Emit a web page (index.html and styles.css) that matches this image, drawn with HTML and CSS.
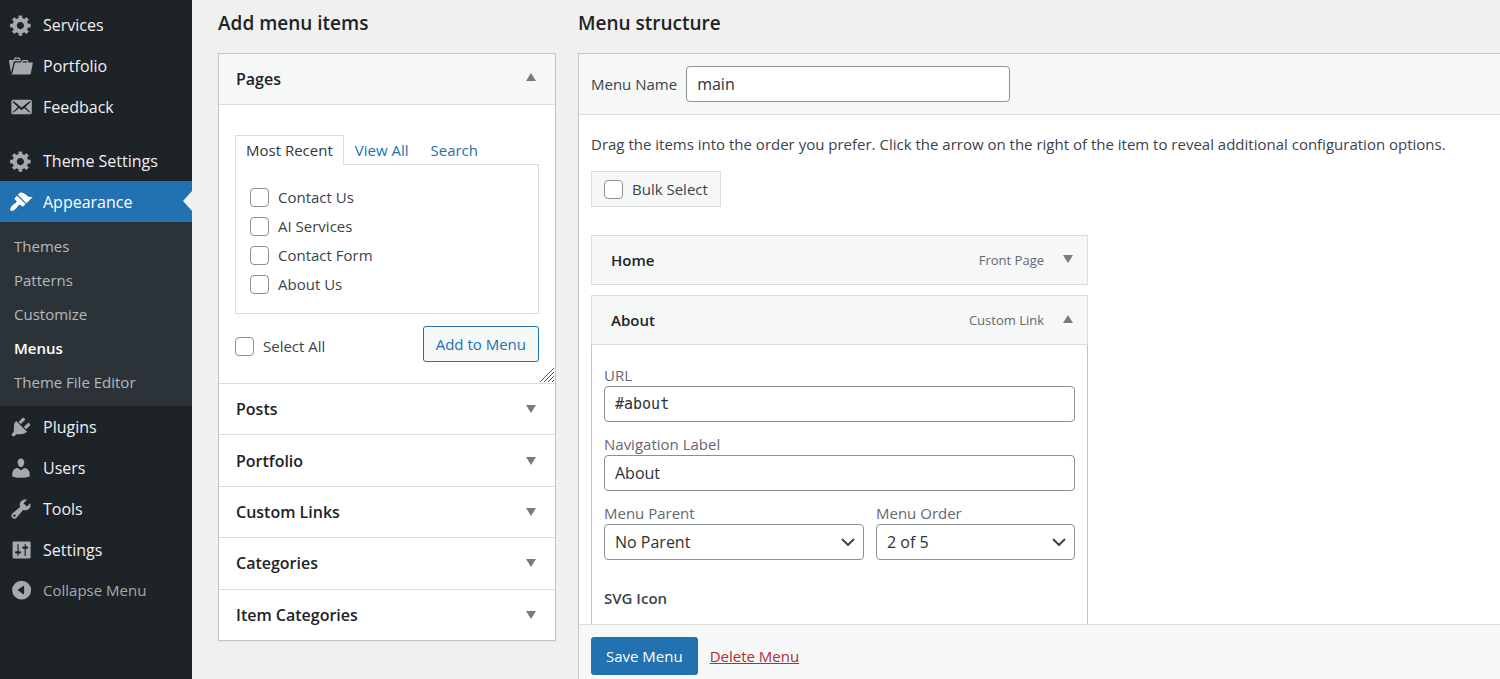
FILE: index.html
```
<!DOCTYPE html>
<html lang="en">
<head>
<meta charset="utf-8">
<title>Menus</title>
<link rel="stylesheet" href="styles.css">
</head>
<body>
<svg class="sprite" aria-hidden="true">
  <symbol id="i-gear" viewBox="0 0 20 20"><path d="M18 12h-2.18c-.17.7-.44 1.35-.81 1.93l1.54 1.54-2.1 2.1-1.54-1.54c-.58.36-1.23.63-1.91.79V19H8v-2.18c-.68-.16-1.33-.43-1.91-.79l-1.54 1.54-2.12-2.12 1.54-1.54c-.36-.58-.63-1.23-.79-1.91H1V9.03h2.17c.16-.7.44-1.35.8-1.94L2.43 5.55l2.1-2.1 1.54 1.54c.58-.37 1.24-.64 1.93-.81V2h3v2.18c.68.16 1.33.43 1.91.79l1.54-1.54 2.12 2.12-1.54 1.54c.36.59.64 1.24.8 1.94H18V12zm-8.5 1.5c1.66 0 3-1.34 3-3s-1.34-3-3-3-3 1.34-3 3 1.34 3 3 3z"/></symbol>
  <symbol id="i-portfolio" viewBox="0 0 20 20"><path d="M4 5H.78c-.37 0-.74.32-.69.84l1.56 9.99S3.5 8.47 3.86 6.7c.11-.53.61-.7.98-.7H10s-.7-2.08-.77-2.31C9.11 3.25 8.89 3 8.45 3H5.14c-.36 0-.7.23-.8.64C4.25 4.04 4 5 4 5zm4.88 0h-4s.42-1 .87-1h2.13c.48 0 1 1 1 1zM2.67 16.25c-.31.47-.76.75-1.26.75h15.73c.54 0 .92-.31 1.03-.83.44-2.19 1.68-8.44 1.68-8.44.07-.5-.3-.73-.62-.73H16V5.53c0-.16-.26-.53-.66-.53h-3.76c-.52 0-.87.58-.87.58L10 7H5.59c-.32 0-.63.19-.69.5 0 0-1.59 6.7-1.72 7.33-.07.37-.22.99-.51 1.42zM15.38 7H11s.58-1 1.13-1h2.29c.71 0 .96 1 .96 1z"/></symbol>
  <symbol id="i-mail" viewBox="0 0 20 20"><path d="M19 14.5v-9c0-.83-.67-1.5-1.5-1.5H3.49c-.83 0-1.5.67-1.5 1.5v9c0 .83.67 1.5 1.5 1.5H17.5c.83 0 1.5-.67 1.5-1.5zm-1.31-9.11c.33.33.15.67-.03.84L13.6 9.95l3.9 4.06c.12.14.2.36.06.51-.13.16-.43.15-.56.05l-4.37-3.73-2.14 1.95-2.13-1.95-4.37 3.73c-.13.1-.43.11-.56-.05-.14-.15-.06-.37.06-.51l3.9-4.06-4.06-3.72c-.18-.17-.36-.51-.03-.84s.67-.17.95.07l6.24 5.04 6.25-5.04c.28-.24.62-.4.95-.07z"/></symbol>
  <symbol id="i-brush" viewBox="0 0 20 20"><path d="M14.48 11.06L7.41 3.99l1.5-1.5c.5-.56 2.3-.47 3.51.32 1.21.8 1.43 1.28 2.91 2.1 1.18.64 2.45 1.26 4.45.85zm-.71.71L6.7 4.7 4.93 6.47c-.39.39-.39 1.02 0 1.41l1.06 1.06c.39.39.39 1.03 0 1.42-.6.6-1.43 1.11-2.21 1.69-.35.26-.7.53-1.01.84C1.43 14.23.4 16.08 1.4 17.07c.99 1 2.84-.03 4.18-1.36.31-.31.58-.66.85-1.02.57-.78 1.08-1.61 1.69-2.21.39-.39 1.02-.39 1.41 0l1.06 1.06c.39.39 1.02.39 1.41 0z"/></symbol>
  <symbol id="i-plug" viewBox="0 0 20 20"><path d="M13.11 4.36L9.87 7.6 8 5.73l3.24-3.24c.35-.34 1.05-.2 1.56.32.52.51.66 1.21.31 1.55zm-8 1.77l.91-1.12 9.01 9.01-1.19.84c-.71.71-2.63 1.16-3.82 1.16H6.14L4.9 17.26c-.59.59-1.54.59-2.12 0-.59-.58-.59-1.53 0-2.12l1.24-1.24v-3.88c0-1.13.4-3.19 1.09-3.89zm7.26 3.97l3.24-3.24c.34-.35 1.04-.21 1.55.31.52.51.66 1.21.31 1.55l-3.24 3.25z"/></symbol>
  <symbol id="i-user" viewBox="0 0 20 20"><path d="M10 9.25c-2.27 0-2.73-3.44-2.73-3.44C7 4.02 7.82 2 9.97 2c2.16 0 2.98 2.02 2.71 3.81 0 0-.41 3.44-2.68 3.44zm0 2.57L12.72 10c2.39 0 4.52 2.33 4.52 4.53v2.49s-3.65 1.13-7.24 1.13c-3.65 0-7.24-1.13-7.24-1.13v-2.49c0-2.25 1.94-4.48 4.47-4.48z"/></symbol>
  <symbol id="i-wrench" viewBox="0 0 20 20"><path d="M16.68 9.77c-1.34 1.34-3.3 1.67-4.95.99l-5.41 6.52c-.99.99-2.59.99-3.58 0s-.99-2.59 0-3.57l6.52-5.42c-.68-1.65-.35-3.61.99-4.95 1.28-1.28 3.12-1.62 4.72-1.06l-2.89 2.89 2.82 2.82 2.86-2.87c.53 1.58.18 3.39-1.08 4.65zM3.81 16.21c.4.39 1.04.39 1.43 0 .4-.4.4-1.04 0-1.43-.39-.4-1.03-.4-1.43 0-.39.39-.39 1.03 0 1.43z"/></symbol>
  <symbol id="i-sliders" viewBox="0 0 20 20"><path d="M18 16V4c0-.55-.45-1-1-1H4c-.55 0-1 .45-1 1v12c0 .55.45 1 1 1h13c.55 0 1-.45 1-1zM8 11h1c.55 0 1 .45 1 1s-.45 1-1 1H8v1.500c0 .28-.22.5-.5.5s-.5-.22-.5-.5V13H6c-.55 0-1-.45-1-1s.45-1 1-1h1V5.500c0-.28.22-.5.5-.5s.5.22.5.5V11zm5-2h-1c-.55 0-1-.45-1-1s.45-1 1-1h1V5.500c0-.28.22-.5.5-.5s.5.22.5.5V7h1c.55 0 1 .45 1 1s-.45 1-1 1h-1v5.500c0 .28-.22.5-.5.5s-.5-.22-.5-.5V9z"/></symbol>
  <symbol id="i-collapse" viewBox="0 0 20 20"><path fill-rule="evenodd" d="M10.500 2.200a7.900 7.900 0 1 0 0 15.800 7.900 7.900 0 0 0 0-15.800zM12.600 6.200v7.800L7 10.100z"/></symbol>
  <symbol id="i-down" viewBox="0 0 10 8"><path d="M0 0h10L5 8z"/></symbol>
  <symbol id="i-up" viewBox="0 0 10 8"><path d="M0 8h10L5 0z"/></symbol>
  <symbol id="i-chevron" viewBox="0 0 14 8"><path d="M1 1l6 6 6-6" fill="none" stroke="currentColor" stroke-width="2"/></symbol>
  <symbol id="i-grip" viewBox="0 0 14 14"><path d="M0 14L14 0M4 14L14 4M8 14l6-6M12 14l2-2" fill="none" stroke="currentColor" stroke-width="1"/></symbol>
</svg>

<div class="app">
  <nav class="sidebar" aria-label="Main menu">
    <a class="nav-link" href="#"><svg class="nav-icon"><use href="#i-gear"/></svg>Services</a>
    <a class="nav-link" href="#"><svg class="nav-icon"><use href="#i-portfolio"/></svg>Portfolio</a>
    <a class="nav-link" href="#"><svg class="nav-icon"><use href="#i-mail"/></svg>Feedback</a>
    <div class="nav-gap"></div>
    <a class="nav-link" href="#"><svg class="nav-icon"><use href="#i-gear"/></svg>Theme Settings</a>
    <a class="nav-link nav-link-current" href="#"><svg class="nav-icon"><use href="#i-brush"/></svg>Appearance</a>
    <div class="submenu">
      <a class="submenu-link" href="#">Themes</a>
      <a class="submenu-link" href="#">Patterns</a>
      <a class="submenu-link" href="#">Customize</a>
      <a class="submenu-link submenu-link-current" href="#">Menus</a>
      <a class="submenu-link" href="#">Theme File Editor</a>
    </div>
    <a class="nav-link" href="#"><svg class="nav-icon"><use href="#i-plug"/></svg>Plugins</a>
    <a class="nav-link" href="#"><svg class="nav-icon"><use href="#i-user"/></svg>Users</a>
    <a class="nav-link" href="#"><svg class="nav-icon"><use href="#i-wrench"/></svg>Tools</a>
    <a class="nav-link" href="#"><svg class="nav-icon"><use href="#i-sliders"/></svg>Settings</a>
    <button class="nav-link nav-collapse" type="button"><svg class="nav-icon"><use href="#i-collapse"/></svg>Collapse Menu</button>
  </nav>

  <main class="main">
    <section class="add-items">
      <h2 class="column-title">Add menu items</h2>
      <div class="accordion">
        <button class="accordion-head accordion-head-open" type="button" aria-expanded="true">Pages<svg class="arrow"><use href="#i-up"/></svg></button>
        <div class="pages">
          <div class="tabs">
            <a class="tab tab-current" href="#">Most Recent</a>
            <a class="tab" href="#">View All</a>
            <a class="tab" href="#">Search</a>
          </div>
          <div class="page-list">
            <label class="check"><input class="checkbox" type="checkbox">Contact Us</label>
            <label class="check"><input class="checkbox" type="checkbox">AI Services</label>
            <label class="check"><input class="checkbox" type="checkbox">Contact Form</label>
            <label class="check"><input class="checkbox" type="checkbox">About Us</label>
          </div>
          <div class="page-actions">
            <label class="check select-all"><input class="checkbox" type="checkbox">Select All</label>
            <button class="button-outline" type="button">Add to Menu</button>
          </div>
          <svg class="grip"><use href="#i-grip"/></svg>
        </div>
        <div class="accordion-rest">
          <button class="accordion-head" type="button">Posts<svg class="arrow"><use href="#i-down"/></svg></button>
          <button class="accordion-head" type="button">Portfolio<svg class="arrow"><use href="#i-down"/></svg></button>
          <button class="accordion-head" type="button">Custom Links<svg class="arrow"><use href="#i-down"/></svg></button>
          <button class="accordion-head" type="button">Categories<svg class="arrow"><use href="#i-down"/></svg></button>
          <button class="accordion-head" type="button">Item Categories<svg class="arrow"><use href="#i-down"/></svg></button>
        </div>
      </div>
    </section>

    <section class="structure">
      <h2 class="column-title">Menu structure</h2>
      <form class="editor">
        <div class="editor-head">
          <label for="menu-name">Menu Name</label>
          <input class="field menu-name" id="menu-name" type="text" value="main">
        </div>
        <div class="editor-body">
          <p class="hint">Drag the items into the order you prefer. Click the arrow on the right of the item to reveal additional configuration options.</p>
          <label class="check bulk"><input class="checkbox" type="checkbox">Bulk Select</label>
          <div class="items">
            <div class="item-bar"><strong class="item-name">Home</strong><span class="item-type">Front Page</span><svg class="arrow"><use href="#i-down"/></svg></div>
            <div class="item">
              <div class="item-bar"><strong class="item-name">About</strong><span class="item-type">Custom Link</span><svg class="arrow"><use href="#i-up"/></svg></div>
              <div class="item-settings">
                <div class="group"><label for="url">URL</label><input class="field field-code" id="url" type="text" value="#about"></div>
                <div class="group"><label for="nav-label">Navigation Label</label><input class="field" id="nav-label" type="text" value="About"></div>
                <div class="group-row">
                  <div class="group"><label for="parent">Menu Parent</label>
                    <span class="select-wrap"><select class="field" id="parent"><option>No Parent</option></select><svg class="chevron"><use href="#i-chevron"/></svg></span></div>
                  <div class="group"><label for="order">Menu Order</label>
                    <span class="select-wrap"><select class="field" id="order"><option>2 of 5</option></select><svg class="chevron"><use href="#i-chevron"/></svg></span></div>
                </div>
                <strong class="svg-label">SVG Icon</strong>
              </div>
            </div>
          </div>
        </div>
        <div class="editor-foot">
          <button class="button-primary" type="button">Save Menu</button>
          <a class="delete" href="#">Delete Menu</a>
        </div>
      </form>
    </section>
  </main>
</div>
</body>
</html>
```

FILE: styles.css
```
* { box-sizing: border-box; }

body {
  margin: 0;
  background: #f0f0f1;
  color: #3c434a;
  font: 15px/20px "Open Sans", "Noto Sans", sans-serif;
}

button, input, select { font: inherit; color: inherit; }
a { text-decoration: none; }
.sprite { display: none; }

.app { display: flex; height: 100vh; overflow: hidden; }

/* Sidebar */
.sidebar { flex: 0 0 192px; padding-top: 4px; background: #1d2327; }
.nav-link {
  position: relative;
  display: flex;
  align-items: center;
  gap: 10px;
  width: 100%;
  height: 41px;
  padding: 0 9px;
  border: 0;
  background: none;
  color: #f0f0f1;
  font-size: 16px;
}
.nav-icon { flex: none; width: 24px; height: 24px; fill: #a7aaad; }
.nav-gap { height: 13px; }
.nav-link-current { background: #2271b1; color: #fff; }
.nav-link-current .nav-icon { fill: #fff; }
.nav-link-current::after {
  content: "";
  position: absolute;
  right: 0;
  top: 10px;
  border: 10px solid transparent;
  border-left-width: 0;
  border-right: 9px solid #f0f0f1;
}
.nav-collapse { height: 40px; color: #a7aaad; font-size: 15px; }
.submenu { padding: 7px 0; background: #2c3338; }
.submenu-link { display: block; padding: 7px 14px; color: #b4b9be; }
.submenu-link-current { color: #fff; font-weight: 600; }

/* Columns */
.main { flex: 1; display: flex; gap: 22px; min-width: 0; padding-left: 26px; }
.add-items { flex: 0 0 338px; }
.structure { flex: 1; display: flex; flex-direction: column; min-width: 0; }
.column-title { margin: 0; padding: 9px 0 16px; color: #1d2327; font-size: 19px; line-height: 28px; font-weight: 600; }

/* Accordion */
.accordion { border: 1px solid #c3c4c7; background: #fff; box-shadow: 0 1px 1px #0000000a; }
.accordion-head {
  display: flex;
  align-items: center;
  justify-content: space-between;
  width: 100%;
  padding: 0 19px 0 17px;
  border: 0;
  border-top: 1px solid #dcdcde;
  background: none;
  color: #1d2327;
  font-size: 16px;
  font-weight: 600;
}
.accordion-head-open { height: 51px; border-top: 0; border-bottom: 1px solid #dcdcde; background: #f6f7f7; }
.accordion-head-open .arrow { margin-bottom: 4px; }
.accordion-rest { display: grid; grid-auto-rows: 1fr; min-height: 257px; }
.arrow { flex: none; width: 10px; height: 8px; fill: #787c82; }
.pages { position: relative; padding: 30px 16px 21px; }
.tabs { display: flex; }
.tab { padding: 4px 10px; color: #2271b1; border: 1px solid transparent; border-bottom: 0; }
.tab-current { position: relative; z-index: 1; margin-bottom: -1px; padding-bottom: 5px; border-color: #dcdcde; background: #fff; color: #32373c; }
.page-list { display: grid; gap: 9px; padding: 22px 14px 19px; border: 1px solid #dcdcde; }
.check { display: flex; align-items: center; gap: 9px; }
.checkbox { appearance: none; flex: none; width: 19px; height: 19px; margin: 0; border: 1px solid #8c8f94; border-radius: 4px; background: #fff; }
.page-actions { display: flex; align-items: center; justify-content: space-between; padding-top: 12px; }
.select-all { padding-top: 4px; }
.button-outline { height: 36px; padding: 0 12px; border: 1px solid #2271b1; border-radius: 3px; background: #f6f7f7; color: #2271b1; }
.grip { position: absolute; right: 1px; bottom: 1px; width: 14px; height: 14px; color: #50575e; }

/* Editor */
.editor { flex: 1; display: flex; flex-direction: column; min-height: 0; border: 1px solid #c3c4c7; border-width: 1px 0 0 1px; background: #fff; }
.editor-head { display: flex; align-items: center; gap: 9px; padding: 12px; border-bottom: 1px solid #dcdcde; background: #f6f7f7; }
.field {
  width: 100%;
  height: 36px;
  padding: 0 10px;
  border: 1px solid #8c8f94;
  border-radius: 4px;
  background: #fff;
  color: #2c3338;
  font-size: 16px;
}
.menu-name { width: 324px; }
.editor-body { flex: 1; min-height: 0; padding: 19px 12px 0; overflow: hidden; }
.hint { margin: 0 0 17px; white-space: nowrap; }
.bulk { width: max-content; height: 36px; padding: 0 12px; border: 1px solid #dcdcde; background: #f6f7f7; }
.items { display: grid; gap: 10px; max-width: 497px; margin-top: 28px; }
.item-bar { display: flex; align-items: center; height: 50px; padding: 0 14px 0 19px; border: 1px solid #dcdcde; background: #f6f7f7; }
.item-bar .arrow { margin-bottom: 2px; }
.item-name { flex: 1; color: #1d2327; font-weight: 600; }
.item-type { margin-right: 19px; color: #646970; font-size: 13px; }
.item-settings { padding: 20px 12px 30px; border: 1px solid #c3c4c7; border-top: 0; }
.group { display: flex; flex-direction: column; flex: 1; margin-bottom: 12px; color: #646970; line-height: 21px; }
.group-row { display: grid; grid-template-columns: 260fr 199fr; gap: 12px; margin-bottom: 16px; }
.field-code { font-family: "DejaVu Sans Mono", monospace; font-size: 15px; }
.select-wrap { position: relative; display: flex; }
.select-wrap .field { appearance: none; }
.chevron { position: absolute; right: 9px; top: 14px; width: 14px; height: 8px; color: #3c434a; pointer-events: none; }
.svg-label { font-weight: 600; }
.editor-foot { display: flex; align-items: center; gap: 12px; padding: 12px 12px 4px; border-top: 1px solid #dcdcde; background: #f6f7f7; }
.button-primary { height: 38px; padding: 0 15px; border: 0; border-radius: 3px; background: #2271b1; color: #fff; }
.delete { color: #b32d2e; text-decoration: underline; }
```
